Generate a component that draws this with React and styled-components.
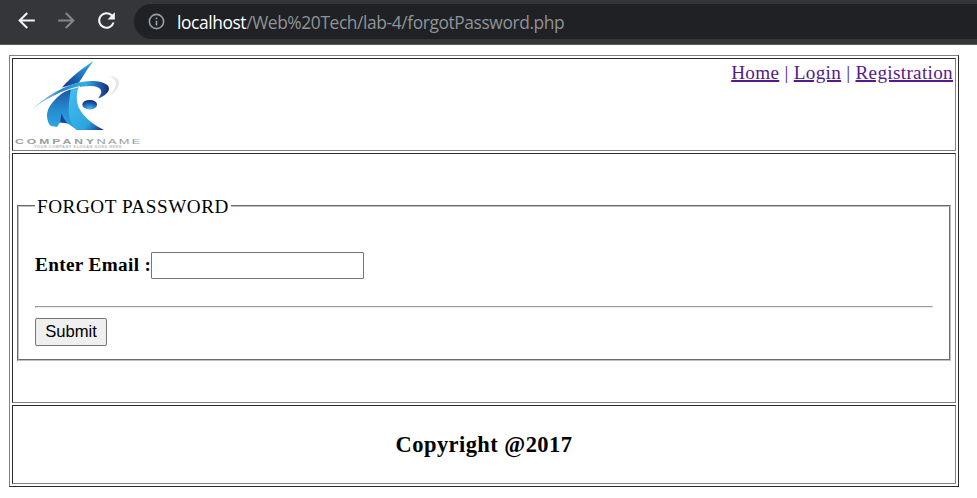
import React from "react";
import styled, { createGlobalStyle } from "styled-components";

const GlobalStyle = createGlobalStyle`
  * { box-sizing: border-box; }
  body {
    margin: 0;
    background: #fff;
    color: #000;
    font: 19.2px/22px "Liberation Serif", "Times New Roman", serif;
    overflow: hidden;
  }
`;

const BrowserBar = styled.header`
  display: flex;
  align-items: flex-start;
  height: 45px;
  background: #35363a;
  border-bottom: 1px solid #5b5c60;
`;

const NavIcons = styled.div`
  display: flex;
  flex: none;
  width: 134px;
  padding: 8px 0 0 14px;
  gap: 15px;
`;

const NavIcon = styled.svg`
  width: 25px;
  height: 25px;
  fill: ${(p) => (p.$dim ? "#85868a" : "#f1f3f4")};
`;

const AddressBar = styled.div`
  display: flex;
  align-items: center;
  flex: 1;
  height: 35px;
  margin-top: 4px;
  padding-left: 13px;
  background: #202124;
  border-radius: 18px 0 0 18px;
`;

const InfoIcon = styled.svg`
  width: 19px;
  height: 19px;
  margin-right: 11px;
  fill: #9aa0a6;
`;

const Url = styled.span`
  color: #8f9398;
  font: 17.4px/24px "Open Sans", "Noto Sans", sans-serif;
  letter-spacing: -0.41px;
  white-space: nowrap;
`;

const Host = styled.span`
  color: #fff;
`;

const PageTable = styled.main`
  display: grid;
  grid-template-rows: 93px 250px 79px;
  gap: 2px;
  width: 950px;
  height: 432px;
  margin: 10px 0 0 9px;
  padding: 2px;
  border: 1px solid;
  border-color: #808080 #2b2b2b #2b2b2b #808080;
`;

const Cell = styled.section`
  border: 1px solid;
  border-color: #2b2b2b #808080 #808080 #2b2b2b;
`;

const HeaderCell = styled(Cell)`
  display: flex;
  justify-content: space-between;
  padding: 1px 2px 0 1px;
`;

const FormCell = styled(Cell)`
  padding: 41px 4px 0;
`;

const FooterCell = styled(Cell)`
  display: flex;
  align-items: center;
  justify-content: center;
`;

const LogoArt = styled.svg`
  width: 130px;
  height: 90px;
  flex: none;
`;

const Links = styled.nav`
  padding-top: 2px;
  color: #551a8b;
  letter-spacing: 0.31px;
  white-space: nowrap;
`;

const PageLink = styled.a`
  color: #551a8b;
  text-decoration: underline;
  text-decoration-thickness: 2px;
`;

const Fieldset = styled.fieldset`
  height: 166px;
  margin: 0;
  padding: 0 16px;
  border: 2px groove #c0c0c0;
`;

const Legend = styled.legend`
  height: 22px;
  padding: 0 2px;
  line-height: 24px;
  letter-spacing: 0.53px;
  white-space: nowrap;
`;

const FieldRow = styled.div`
  display: flex;
  align-items: center;
  height: 27px;
  margin-top: 35px;
`;

const Label = styled.label`
  width: 116px;
  padding-bottom: 2px;
  font-weight: bold;
  letter-spacing: 0.36px;
  white-space: nowrap;
`;

const EmailInput = styled.input`
  width: 213px;
  height: 27px;
  padding: 1px 2px;
  border: 1px solid #767676;
  border-radius: 1px;
  font: 16px "Liberation Sans", Arial, sans-serif;
`;

const Divider = styled.hr`
  height: 2px;
  margin: 27px 0 10px;
  border: 1px solid;
  border-color: #9a9a9a #eee #eee #9a9a9a;
`;

const SubmitButton = styled.button`
  display: block;
  width: 72px;
  height: 28px;
  padding: 0 0 1px;
  background: #efefef;
  border: 1px solid #767676;
  border-radius: 2px;
  color: #000;
  font: 16.6px/20px "Liberation Sans", Arial, sans-serif;
`;

const Copyright = styled.h3`
  margin: 0;
  font-size: 22.5px;
  line-height: 26px;
  letter-spacing: 0.43px;
`;

function Logo() {
  return (
    <LogoArt viewBox="14 60 130 90" role="img" aria-label="Company name">
      <defs>
        <linearGradient id="spire" x1="0" y1="1" x2="1" y2="0">
          <stop offset="0" stopColor="#1c2f85" />
          <stop offset="0.4" stopColor="#1b63b0" />
          <stop offset="1" stopColor="#35b4e8" />
        </linearGradient>
        <linearGradient id="swoosh" x1="0" y1="0" x2="1" y2="0">
          <stop offset="0" stopColor="#b5e6f8" />
          <stop offset="0.4" stopColor="#2a86cc" />
          <stop offset="0.7" stopColor="#31b0e8" />
          <stop offset="1" stopColor="#16277e" />
        </linearGradient>
        <linearGradient id="wing" x1="0" y1="0" x2="0" y2="1">
          <stop offset="0" stopColor="#1c4a9c" />
          <stop offset="0.5" stopColor="#2488cd" />
          <stop offset="1" stopColor="#2dabe4" />
        </linearGradient>
        <linearGradient id="body" x1="0" y1="0" x2="1" y2="1">
          <stop offset="0" stopColor="#45c0f0" />
          <stop offset="0.7" stopColor="#2ba5df" />
          <stop offset="1" stopColor="#19257a" />
        </linearGradient>
        <radialGradient id="ball" cx="0.5" cy="0.9" r="0.85">
          <stop offset="0" stopColor="#3cc0f0" />
          <stop offset="0.5" stopColor="#1f74be" />
          <stop offset="1" stopColor="#182579" />
        </radialGradient>
      </defs>
      <path d="M93.500 61C84 67 71 77 62 87.500L79 82.500C84 75 88 68 93.500 61Z" fill="url(#spire)" />
      <path d="M72 87C56 96 46 107 47 117Q48 124 51 126L57 127L61 121L67 123L77 130H90L75 106L77 86Z" fill="url(#wing)" />
      <path d="M71 88Q67 111 70 119Q72 126 77 130H104Q84 120 78 106Q75 96 79 86Z" fill="url(#body)" />
      <path d="M61.500 113.500L60 122.500L68 123.500Q64 120 61.500 113.500Z" fill="#1c4597" />
      <path d="M31 110C53 90 75 80.500 93 81C114 82 113 93 98 98.500C104 91 102 86.500 90 86C71 86 49 96 31 110Z" fill="url(#swoosh)" />
      <path d="M45 102Q62 90 80 86.500" fill="none" stroke="#fff" strokeWidth=".9" />
      <path d="M109 76Q119 76 119 84Q118 91 109 96Q116 89 116 83Q115 78 109 76Z" fill="#e7e7e9" />
      <ellipse cx="89.700" cy="104.700" rx="7.400" ry="4.800" fill="url(#ball)" />
      <g fontFamily="Liberation Sans, Arial, sans-serif">
        <text x="15" y="143.600" fontSize="8" fontWeight="bold" fill="#9c9c9c" letterSpacing="2" textLength="82" lengthAdjust="spacingAndGlyphs">COMPANY</text>
        <text x="96.500" y="143.600" fontSize="8" fill="#999" letterSpacing="1.400" textLength="46" lengthAdjust="spacingAndGlyphs">NAME</text>
        <text x="34" y="148" fontSize="2.700" fontWeight="bold" fill="#b8b8b8" letterSpacing=".4" textLength="88" lengthAdjust="spacingAndGlyphs">YOUR COMPANY SLOGAN GOES HERE</text>
      </g>
    </LogoArt>
  );
}

export default function App() {
  return (
    <>
      <GlobalStyle />
      <BrowserBar>
        <NavIcons>
          <NavIcon viewBox="0 0 24 24"><path d="M20 11H7.830l5.590-5.590L12 4l-8 8 8 8 1.410-1.410L7.830 13H20z" /></NavIcon>
          <NavIcon $dim viewBox="0 0 24 24"><path d="M4 11h12.170l-5.590-5.590L12 4l8 8-8 8-1.410-1.410L16.170 13H4z" /></NavIcon>
          <NavIcon viewBox="0 0 24 24"><path d="M17.650 6.350A8 8 0 1 0 19.730 14h-2.080A6 6 0 1 1 12 6c1.660 0 3.140.69 4.220 1.780L13 11h7V4z" /></NavIcon>
        </NavIcons>
        <AddressBar>
          <InfoIcon viewBox="0 0 24 24"><path d="M11 7h2v2h-2zm0 4h2v6h-2zm1-9a10 10 0 1 0 0 20 10 10 0 0 0 0-20m0 18a8 8 0 1 1 0-16 8 8 0 0 1 0 16" /></InfoIcon>
          <Url><Host>localhost</Host>/Web%20Tech/lab-4/forgotPassword.php</Url>
        </AddressBar>
      </BrowserBar>
      <PageTable>
        <HeaderCell>
          <Logo />
          <Links>
            <PageLink href="#home">Home</PageLink> | <PageLink href="#login">Login</PageLink> | <PageLink href="#registration">Registration</PageLink>
          </Links>
        </HeaderCell>
        <FormCell>
          <Fieldset>
            <Legend>FORGOT PASSWORD</Legend>
            <FieldRow>
              <Label htmlFor="email">Enter Email :</Label>
              <EmailInput id="email" type="text" />
            </FieldRow>
            <Divider />
            <SubmitButton type="button">Submit</SubmitButton>
          </Fieldset>
        </FormCell>
        <FooterCell>
          <Copyright>Copyright @2017</Copyright>
        </FooterCell>
      </PageTable>
    </>
  );
}
